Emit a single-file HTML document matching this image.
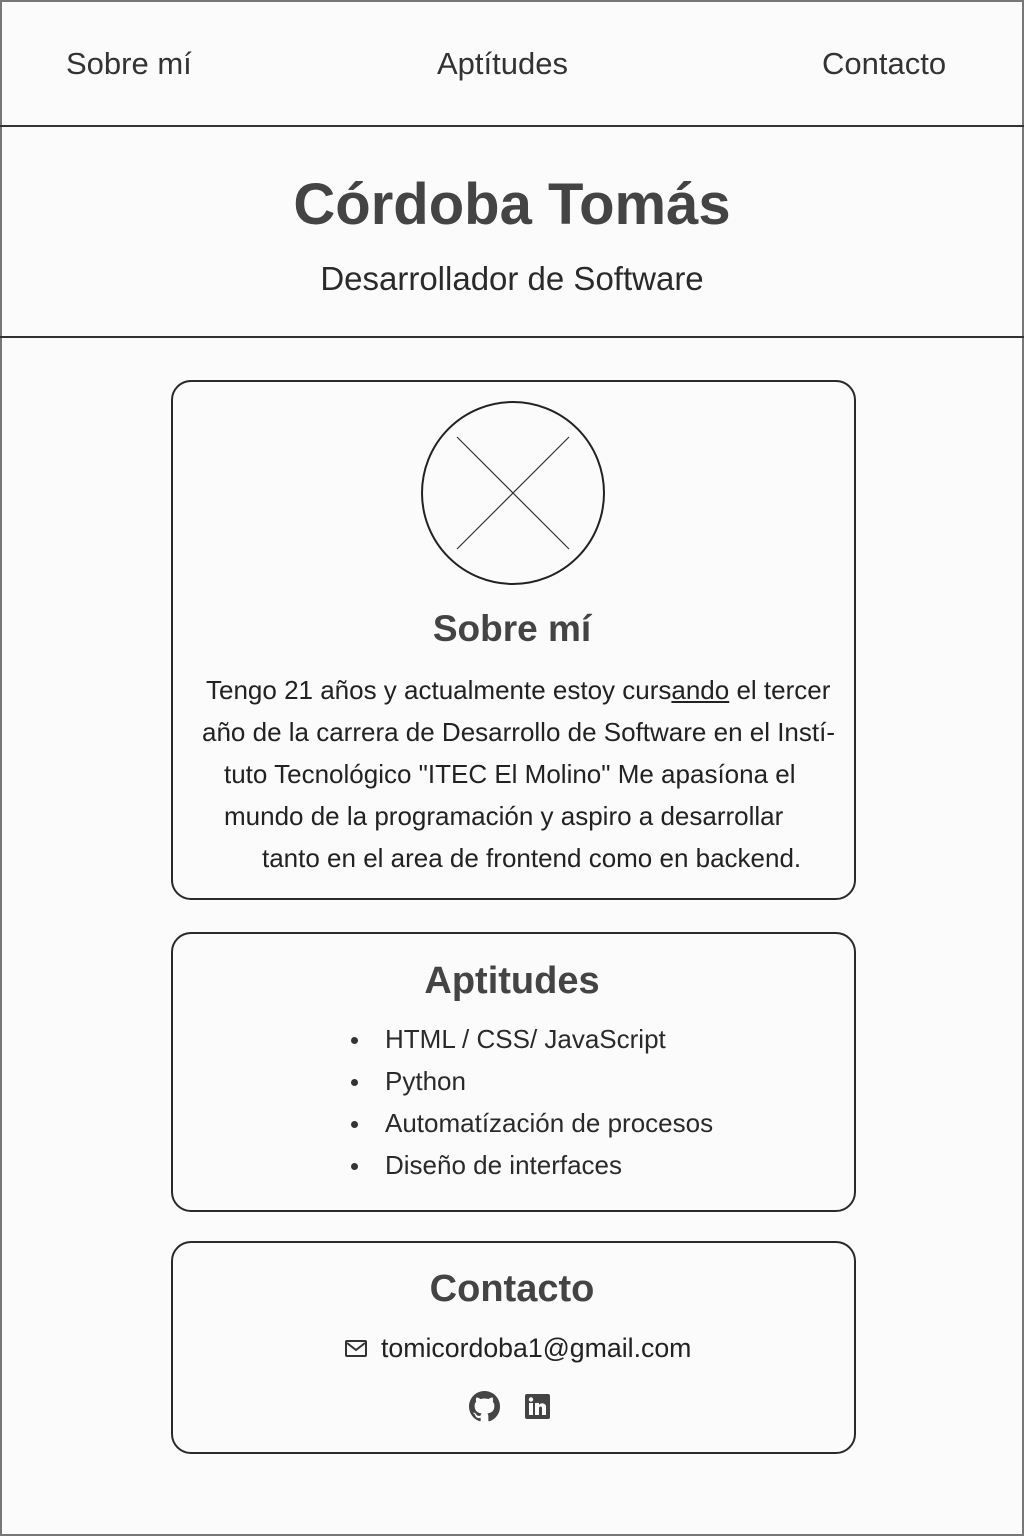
<!DOCTYPE html>
<html><head><meta charset="utf-8"><style>
*{margin:0;padding:0;box-sizing:border-box}
body{width:1024px;height:1536px;background:#fbfbfb;font-family:"Liberation Sans",sans-serif;color:#333;position:relative;overflow:hidden}
.frame{position:absolute;left:0;top:0;width:1024px;height:1536px;border:2px solid #777}
.a{position:absolute;white-space:nowrap}
.hl{position:absolute;left:0;width:1024px;height:2px;background:#333}
.card{position:absolute;left:171px;width:685px;border:2px solid #2a2a2a;border-radius:20px}
.c{left:0;width:1024px;text-align:center}
.p{font-size:26px;color:#222}
.li{font-size:26px;color:#2a2a2a}
.dot{position:absolute;width:7px;height:7px;border-radius:50%;background:#333}
</style></head><body>
<div class="frame"></div>
<div class="a" style="left:66px;top:46px;font-size:31px">Sobre mí</div>
<div class="a" style="left:437px;top:46px;font-size:31px">Aptítudes</div>
<div class="a" style="left:822px;top:46px;font-size:31px">Contacto</div>
<div class="hl" style="top:125px"></div>
<div class="a c" style="top:171px;font-size:58px;font-weight:bold;color:#444">Córdoba Tomás</div>
<div class="a c" style="top:260px;font-size:33px;color:#2a2a2a">Desarrollador de Software</div>
<div class="hl" style="top:336px"></div>

<div class="card" style="top:380px;height:520px"></div>
<svg class="a" style="left:420px;top:400px" width="186" height="186"><circle cx="93" cy="93" r="91" fill="none" stroke="#222" stroke-width="2"/><line x1="37" y1="37" x2="149" y2="149" stroke="#333" stroke-width="1.2"/><line x1="149" y1="37" x2="37" y2="149" stroke="#333" stroke-width="1.2"/></svg>
<div class="a c" style="top:608px;font-size:37px;font-weight:bold;color:#444">Sobre mí</div>
<div class="a p" style="left:206px;top:675px">Tengo 21 años y actualmente estoy curs<u>ando</u> el tercer</div>
<div class="a p" style="left:202px;top:717px">año de la carrera de Desarrollo de Software en el Instí-</div>
<div class="a p" style="left:224px;top:759px">tuto Tecnológico "ITEC El Molino" Me apasíona el</div>
<div class="a p" style="left:224px;top:801px">mundo de la programación y aspiro a desarrollar</div>
<div class="a p" style="left:262px;top:843px">tanto en el area de frontend como en backend.</div>

<div class="card" style="top:932px;height:280px"></div>
<div class="a c" style="top:960px;font-size:38px;font-weight:bold;color:#444">Aptitudes</div>
<div class="dot" style="left:351px;top:1037px"></div><div class="a li" style="left:385px;top:1024px">HTML / CSS/ JavaScript</div>
<div class="dot" style="left:351px;top:1079px"></div><div class="a li" style="left:385px;top:1066px">Python</div>
<div class="dot" style="left:351px;top:1121px"></div><div class="a li" style="left:385px;top:1108px">Automatízación de procesos</div>
<div class="dot" style="left:351px;top:1163px"></div><div class="a li" style="left:385px;top:1150px">Diseño de interfaces</div>

<div class="card" style="top:1241px;height:213px"></div>
<div class="a c" style="top:1268px;font-size:38px;font-weight:bold;color:#444">Contacto</div>
<svg class="a" style="left:345px;top:1340px" width="22" height="17"><rect x="1" y="1" width="20" height="15" rx="1" fill="none" stroke="#333" stroke-width="2"/><path d="M2 3 L11 10 L20 3" fill="none" stroke="#333" stroke-width="2"/></svg>
<div class="a" style="left:381px;top:1333px;font-size:26.7px;color:#222">tomicordoba1@gmail.com</div>
<svg class="a" style="left:469px;top:1391px" width="31" height="31" viewBox="0 0 16 16"><path fill="#444" d="M8 0C3.58 0 0 3.580 0 8c0 3.54 2.29 6.530 5.47 7.59.4.07.55-.17.55-.38v-1.33c-2.23.48-2.7-1.07-2.7-1.07-.36-.92-.89-1.170-.89-1.17-.73-.5.05-.49.05-.49.8.06 1.23.83 1.23.83.71 1.22 1.87.87 2.33.66.07-.52.28-.87.51-1.07-1.78-.2-3.65-.89-3.65-3.95 0-.87.31-1.59.82-2.15-.08-.2-.36-1.02.08-2.12 0 0 .67-.21 2.2.82a7.6 7.6 0 0 1 4 0c1.53-1.04 2.2-.82 2.2-.82.44 1.1.16 1.92.08 2.12.51.56.82 1.27.82 2.15 0 3.07-1.87 3.75-3.65 3.95.29.25.54.73.54 1.48v2.2c0 .21.15.46.55.38A8 8 0 0 0 16 8c0-4.42-3.58-8-8-8z"/></svg>
<svg class="a" style="left:525px;top:1394px" width="25" height="25" viewBox="0 0 25 25"><rect width="25" height="25" rx="2" fill="#444"/><rect x="4" y="9" width="4" height="12" fill="#fff"/><circle cx="6" cy="5.5" r="2.2" fill="#fff"/><path d="M10 9h4v2c1-2 6-2.5 7 1v9h-4v-7c0-2-3-2-3 0v7h-4z" fill="#fff"/></svg>
</body></html>
